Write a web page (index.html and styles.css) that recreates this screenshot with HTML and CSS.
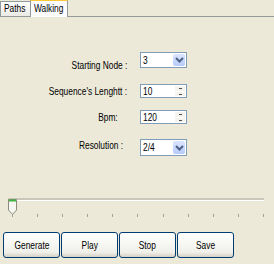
FILE: index.html
```html
<!DOCTYPE html>
<html lang="en">
<head>
    <meta charset="UTF-8">
    <title>Walking</title>
    <link rel="stylesheet" href="styles.css">
</head>
<body>
    <div class="window">
        <div class="tabs">
            <div class="tab paths"><span class="txt">Paths</span></div>
            <div class="tab active walking"><span class="txt">Walking</span></div>
        </div>
        <div class="panel">
            <div class="row row-node">
                <label class="label node"><span class="txt">Starting Node :</span></label>
                <div class="combo">
                    <span class="value"><span class="txt">3</span></span>
                    <span class="drop"><svg width="9" height="6" viewBox="0 0 9 6"><path d="M1 1 L4.5 4.5 L8 1" fill="none" stroke="#4d6185" stroke-width="2"/></svg></span>
                </div>
            </div>

            <div class="row row-length">
                <label class="label"><span class="txt">Sequence's Lenghtt :</span></label>
                <div class="spin">
                    <span class="value"><span class="txt">10</span></span>
                    <span class="arrows"><span class="up"></span><span class="down"></span></span>
                </div>
            </div>

            <div class="row row-bpm">
                <label class="label bpm"><span class="txt">Bpm:</span></label>
                <div class="spin">
                    <span class="value"><span class="txt">120</span></span>
                    <span class="arrows"><span class="up"></span><span class="down"></span></span>
                </div>
            </div>

            <div class="row row-res">
                <label class="label res"><span class="txt">Resolution :</span></label>
                <div class="combo tall">
                    <span class="value"><span class="txt">2/4</span></span>
                    <span class="drop"><svg width="9" height="6" viewBox="0 0 9 6"><path d="M1 1 L4.5 4.5 L8 1" fill="none" stroke="#4d6185" stroke-width="2"/></svg></span>
                </div>
            </div>

            <div class="slider">
                <div class="track"></div>
                <svg class="thumb" width="11" height="18" viewBox="0 0 11 18">
                    <path d="M1.5 1.5 H9.5 V12 L5.5 16.5 L1.5 12 Z" fill="#f7f7f2" stroke="#8a8c80"/>
                    <path d="M2 2.5 H9" stroke="#3fb33f" stroke-width="2"/>
                </svg>
                <div class="ticks">
                    <span></span><span></span><span></span><span></span><span></span><span></span>
                    <span></span><span></span><span></span><span></span><span></span>
                </div>
            </div>

            <div class="buttons">
                <button class="btn"><span class="txt">Generate</span></button>
                <button class="btn"><span class="txt">Play</span></button>
                <button class="btn"><span class="txt">Stop</span></button>
                <button class="btn"><span class="txt">Save</span></button>
            </div>
        </div>
    </div>
</body>
</html>
```

FILE: styles.css
```css
body {
    margin: 0;
    background-color: #ece9d8;
    font-family: "Liberation Sans", Arial, sans-serif;
    font-size: 11px;
    color: #000;
}
.window {
    width: 274px;
    height: 264px;
    overflow: hidden;
}
/* screenshot text is squeezed horizontally */
.txt {
    display: inline-block;
    white-space: nowrap;
    transform: scaleX(0.76);
    transform-origin: left center;
}
.tabs {
    display: flex;
    align-items: flex-end;
    height: 16px;
    border-bottom: 1px solid #919b9c;
}
.tab {
    box-sizing: border-box;
    height: 15px;
    line-height: 13px;
    padding-left: 3px;
    background: linear-gradient(#fefefe, #ebeae5);
    border: 1px solid #919b9c;
    border-bottom: none;
    overflow: hidden;
}
.tab.paths {
    width: 30px;
    border-right: none;
}
.tab.active {
    width: 38px;
    height: 17px;
    line-height: 15px;
    background: #fcfcfe;
    margin-bottom: -1px;
    border-top: 1px solid #ffc83c;
}
.panel {
    padding-top: 35px;
}
.row {
    display: flex;
    align-items: center;
    gap: 13px;
}
.row-length {
    margin-top: 16px;
}
.row-bpm {
    margin-top: 12px;
}
.row-res {
    margin-top: 15px;
}
.label {
    width: 127px;
    text-align: right;
    line-height: 14px;
    white-space: nowrap;
}
.label .txt {
    transform-origin: right center;
}
/* these labels are not centred on their combos */
.label.node {
    margin-top: 5px;
    margin-bottom: -5px;
}
.label.bpm {
    width: 118px;
    padding-right: 9px;
}
.label.res {
    width: 123px;
    padding-right: 4px;
    margin-top: -3px;
    margin-bottom: 3px;
}
.combo,
.spin {
    display: flex;
    align-items: stretch;
    width: 45px;
    height: 12px;
    border: 1px solid #7f9db9;
    background: #fff;
}
.combo {
    height: 14px;
}
.combo.tall {
    height: 15px;
}
.value {
    flex: 1;
    line-height: 12px;
    padding-left: 2px;
}
.combo .value {
    line-height: 14px;
}
.drop {
    width: 12px;
    margin: 1px;
    display: flex;
    align-items: center;
    justify-content: center;
    background: linear-gradient(#dbe5fe, #b6cbfc);
    border-radius: 2px;
}
.arrows {
    width: 10px;
    display: flex;
    flex-direction: column;
    margin: 1px;
}
.up,
.down {
    flex: 1;
    position: relative;
    background: #f4f3ee;
}
.up {
    border-bottom: 1px solid #fff;
}
.up::after,
.down::after {
    content: "";
    position: absolute;
    left: 4px;
    top: 2px;
    width: 3px;
    height: 1px;
    background: #4d4d4d;
}
.slider {
    position: relative;
    margin: 42px 10px 0 8px;
    height: 28px;
}
.track {
    height: 2px;
    margin-top: 6px;
    background: #c9c7ba;
    border-bottom: 1px solid #fff;
}
.thumb {
    position: absolute;
    left: -1px;
    top: 0;
}
.ticks {
    display: flex;
    justify-content: space-between;
    padding: 0 0 0 4px;
    margin-top: 13px;
}
.ticks span {
    width: 1px;
    height: 3px;
    background: #a4a294;
}
.buttons {
    display: flex;
    gap: 1px;
    padding: 0 3px;
    margin-top: 6px;
}
.btn {
    width: 57px;
    height: 26px;
    font-family: inherit;
    font-size: 11px;
    color: #000;
    border: 1px solid #003c74;
    border-radius: 3px;
    background: linear-gradient(#ffffff, #f0f0ea 80%, #d6d0c5);
    padding: 0;
}
.btn .txt {
    transform-origin: center center;
}
```
